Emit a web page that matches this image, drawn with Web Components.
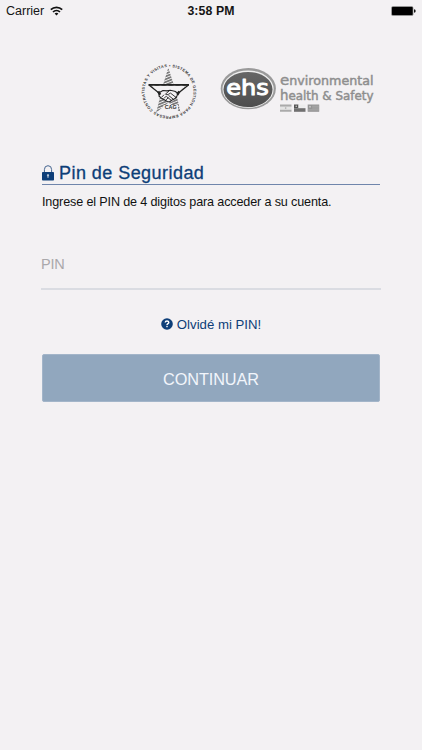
<!DOCTYPE html>
<html lang="es">
<head>
<meta charset="utf-8">
<meta name="viewport" content="width=device-width, initial-scale=1">
<title>Pin de Seguridad</title>
<style>
  body {
    margin: 0;
    min-height: 100vh;
    background: #f3f1f3;
    color: #111;
    font-family: "Liberation Sans", Arial, sans-serif;
  }
</style>
</head>
<body>
<pin-screen></pin-screen>

<script>
class StatusBar extends HTMLElement {
  constructor() {
    super();
    this.attachShadow({ mode: 'open' });
  }

  connectedCallback() {
    this.shadowRoot.innerHTML = `
      <style>
        :host {
          display: grid;
          grid-template-columns: 1fr auto 1fr;
          align-items: center;
          height: 22px;
          padding: 0 6px;
          box-sizing: border-box;
          font-size: 12.5px;
          color: #151515;
        }
        .left {
          display: flex;
          align-items: center;
          gap: 6px;
        }
        .time {
          font-weight: bold;
          font-size: 12.3px;
          letter-spacing: 0.1px;
        }
        .battery {
          justify-self: end;
        }
        svg {
          display: block;
        }
      </style>
      <div class="left">
        <span>${this.getAttribute('carrier')}</span>
        <svg width="13" height="10" viewBox="0 0 13 10" fill="none" stroke="#111" stroke-width="1.7">
          <path d="M.8 3.7a8.1 8.1 0 0 1 11.4 0"/>
          <path d="M3 6a5 5 0 0 1 7 0"/>
          <path d="M6.5 9.6 4.6 7.6a2.7 2.7 0 0 1 3.8 0Z" fill="#111" stroke="none"/>
        </svg>
      </div>
      <div class="time">${this.getAttribute('time')}</div>
      <svg class="battery" width="25" height="10" viewBox="0 0 25 10">
        <rect x=".3" y=".3" width="22" height="9.4" rx="1.5" fill="#777"/>
        <rect x="1" y="1" width="20.6" height="8" rx=".8" fill="#000"/>
        <path d="M23 3.3q1.7.2 1.7 1.7T23 6.7Z" fill="#111"/>
      </svg>
    `;
  }
}

class SealLogo extends HTMLElement {
  constructor() {
    super();
    this.attachShadow({ mode: 'open' });
  }

  connectedCallback() {
    this.shadowRoot.innerHTML = `
      <style>
        :host {
          display: block;
        }
        svg {
          display: block;
          overflow: visible;
        }
        text {
          font-family: "Liberation Sans", Arial, sans-serif;
          font-weight: bold;
          fill: #333;
        }
      </style>
      <svg width="56" height="56" viewBox="0 0 56 56">
        <defs>
          <path id="ring" d="M31.4 4.2A24.5 24.5 0 0 1 24.6 52.8A24.5 24.5 0 0 1 31.4 4.2"/>
          <pattern id="stripes" width="4" height="2.6" patternUnits="userSpaceOnUse" patternTransform="rotate(-22)">
            <rect width="4" height="1.7" fill="#777"/>
          </pattern>
        </defs>
        <text font-size="3.9"><textPath href="#ring" textLength="151">SISTEMA DE GESTION PARA EMPRESAS CONTRATISTAS Y VISITAS •</textPath></text>
        <path d="M27.3 4.8 32.6 21 48 21.3 35.6 32 39.5 49.5 27.5 39.5 15.2 49.5 19.5 32 7 21.3 22.3 21Z" fill="url(#stripes)"/>
        <path d="M11 23H44L35.5 32 32 38 27 40 17.5 32Z" fill="#f3f1f3"/>
        <!-- bowl and handshake -->
        <path d="M7.5 21.9H48" stroke="#222" stroke-width="1.6"/>
        <path d="M8 22 18 30M47.5 22 37.5 30" stroke="#222" stroke-width="1.2"/>
        <g transform="translate(0 .6)">
          <path d="m18 29.2 4-2.3 4 .4 3.2-.7 4.6 1 3.2 2-1.2 3.2-2.1 2.4-2.5 1.1-2.5 1.9-2.4-.2-5.2-3-3-2.3Z" fill="#f3f1f3" stroke="#222" stroke-width="1.1" stroke-linejoin="round"/>
          <path d="m28.5 27-4 3.5q1.3 1.4 3.2.1l1.8-1.1 6 4.7m-7.7-2.2 4.6 3.7m-6.6-2.5 4.2 3.3M21 33.2l1.8-1.8m.4 3.2 1.8-1.8m.4 3.1 1.7-1.6" fill="none" stroke="#222" stroke-width=".9" stroke-linecap="round"/>
          <path d="m16.2 28.6 2-1.5 2 3.2-2 1.7ZM39.3 28.5l-2-1.4-2 3.2 2 1.7Z" fill="#222"/>
        </g>
        <rect x="22.5" y="42" width="14.5" height="5.2" fill="#f3f1f3"/>
        <text x="23.7" y="46.4" font-size="4.8" textLength="12" lengthAdjust="spacingAndGlyphs">CAG</text>
      </svg>
    `;
  }
}

class EhsLogo extends HTMLElement {
  constructor() {
    super();
    this.attachShadow({ mode: 'open' });
  }

  connectedCallback() {
    this.shadowRoot.innerHTML = `
      <style>
        :host {
          display: block;
        }
        svg {
          display: block;
        }
        text {
          font-family: "DejaVu Sans", sans-serif;
          fill: #8e8e8e;
          stroke: #8e8e8e;
          stroke-width: 0.45;
        }
        .mark {
          fill: #fff;
          stroke: #fff;
          stroke-width: 1;
          stroke-linejoin: round;
        }
      </style>
      <svg width="156" height="49" viewBox="0 0 156 49">
        <defs>
          <linearGradient id="disc" x2="0" y2="1">
            <stop stop-color="#666"/>
            <stop offset="1" stop-color="#4d4d4d"/>
          </linearGradient>
        </defs>
        <ellipse cx="28.3" cy="25.6" rx="27.6" ry="20.6" fill="#9a9a9a"/>
        <ellipse cx="28.1" cy="26.1" rx="25.6" ry="18.7" fill="#eee"/>
        <ellipse cx="28" cy="26.5" rx="24.5" ry="17.6" fill="url(#disc)"/>
        <text class="mark" x="6.3" y="32" font-size="21.5" textLength="42.5" lengthAdjust="spacingAndGlyphs">ehs</text>
        <text x="60" y="22" textLength="93.5" lengthAdjust="spacingAndGlyphs" font-size="11.8"><tspan font-size="14">e</tspan>nvironmental</text>
        <text x="60" y="37.3" textLength="93.5" lengthAdjust="spacingAndGlyphs" font-size="11.8"><tspan font-size="13.2">h</tspan>ealth &amp; Safety</text>
        <!-- flags -->
        <g transform="translate(60 41.5)">
          <path d="M0 0h11.5v2.3H0zM0 5h11.5v2.3H0z" fill="#aaa"/>
          <path d="M0 2.3h11.5V5H0z" fill="#e4e4e4"/>
          <circle cx="5.7" cy="3.6" r=".8" fill="#aaa"/>
        </g>
        <g transform="translate(74 41.5)">
          <path d="M0 0h4.5v3.7H0z" fill="#555"/>
          <path d="M4.5 0h7v3.7h-7z" fill="#ededed"/>
          <path d="M0 3.7h11.5v3.6H0z" fill="#707070"/>
          <circle cx="2.2" cy="1.8" r=".7" fill="#ddd"/>
        </g>
        <g transform="translate(87.7 41.5)">
          <path d="M0 0h11.5v7.3H0z" fill="#949494"/>
          <path d="M4.5 1.7h7M4.5 3.5h7M0 5.4h11.5" stroke="#b6b6b6" stroke-width=".7"/>
          <circle cx="2.3" cy="2.2" r="1" fill="#c4c4c4"/>
        </g>
      </svg>
    `;
  }
}

class SectionTitle extends HTMLElement {
  constructor() {
    super();
    this.attachShadow({ mode: 'open' });
  }

  connectedCallback() {
    this.shadowRoot.innerHTML = `
      <style>
        :host {
          display: block;
          border-bottom: 1.5px solid #6f85ab;
          color: #0d3e78;
        }
        h1 {
          display: flex;
          align-items: center;
          gap: 5px;
          height: 22px;
          margin: 0;
          font-size: 18px;
          font-weight: normal;
          letter-spacing: 0.45px;
          -webkit-text-stroke: 0.3px currentColor;
        }
        svg {
          display: block;
        }
      </style>
      <h1>
        <svg width="12" height="16" viewBox="0 0 12 16">
          <path d="M2.4 8V4.6a3.6 3.9 0 0 1 7.2 0V8" fill="none" stroke="#45658f" stroke-width="1"/>
          <rect y="7" width="12" height="8.6" rx=".8" fill="#0d3e78"/>
          <path d="M5.4 12.8v-1.6a1.1 1.1 0 1 1 1.2 0v1.6Z" fill="#b9c8d8"/>
        </svg>
        <span><slot></slot></span>
      </h1>
    `;
  }
}

class PinField extends HTMLElement {
  constructor() {
    super();
    this.attachShadow({ mode: 'open' });
  }

  connectedCallback() {
    this.shadowRoot.innerHTML = `
      <style>
        :host {
          display: block;
          height: 50px;
          box-sizing: border-box;
          border-bottom: 2px solid #dadce2;
          line-height: 49px;
          font-size: 14.5px;
          letter-spacing: -0.2px;
          color: #aaa8ab;
        }
      </style>
      <slot></slot>
    `;
  }
}

class HelpLink extends HTMLElement {
  constructor() {
    super();
    this.attachShadow({ mode: 'open' });
  }

  connectedCallback() {
    this.shadowRoot.innerHTML = `
      <style>
        :host {
          display: flex;
          justify-content: center;
          align-items: center;
          gap: 4px;
          height: 18px;
          font-size: 13.2px;
          color: #0d3e78;
        }
        svg {
          display: block;
        }
      </style>
      <svg width="12" height="12" viewBox="0 0 12 12">
        <circle cx="6" cy="6" r="5.8" fill="#0d3e78"/>
        <path d="M4.2 4.5Q4.3 3 6 3t1.8 1.4C7.8 5.6 6 5.6 6 7" fill="none" stroke="#fff" stroke-width="1.4"/>
        <rect x="5.3" y="7.8" width="1.4" height="1.4" fill="#fff"/>
      </svg>
      <span><slot></slot></span>
    `;
  }
}

class PrimaryButton extends HTMLElement {
  constructor() {
    super();
    this.attachShadow({ mode: 'open' });
  }

  connectedCallback() {
    this.shadowRoot.innerHTML = `
      <style>
        :host {
          display: block;
        }
        button {
          display: block;
          width: 100%;
          height: 48px;
          padding: 2px 0 0;
          border: 1px solid #a3b5c9;
          border-radius: 2px;
          background: #91a7be;
          color: #f1f5fb;
          font: 16.3px "Liberation Sans", Arial, sans-serif;
          letter-spacing: -0.1px;
        }
      </style>
      <button type="button"><slot></slot></button>
    `;
  }
}

class PinScreen extends HTMLElement {
  constructor() {
    super();
    this.attachShadow({ mode: 'open' });
  }

  connectedCallback() {
    this.shadowRoot.innerHTML = `
      <style>
        :host {
          display: block;
        }
        header {
          display: flex;
          justify-content: flex-end;
          gap: 23px;
          padding: 41px 46px 0 0;
        }
        main {
          padding: 43px 42px 0;
        }
        p {
          margin: 9px 0 0;
          font-size: 12.6px;
          line-height: 16px;
          letter-spacing: -0.14px;
        }
        pin-field {
          margin: 30px -1px 0;
        }
        help-link {
          margin-top: 25px;
        }
        primary-button {
          margin-top: 21px;
        }
      </style>
      <status-bar carrier="Carrier" time="3:58 PM"></status-bar>
      <header>
        <seal-logo></seal-logo>
        <ehs-logo></ehs-logo>
      </header>
      <main>
        <section-title>Pin de Seguridad</section-title>
        <p>Ingrese el PIN de 4 digitos para acceder a su cuenta.</p>
        <pin-field>PIN</pin-field>
        <help-link>Olvidé mi PIN!</help-link>
        <primary-button>CONTINUAR</primary-button>
      </main>
    `;
  }
}

customElements.define('status-bar', StatusBar);
customElements.define('seal-logo', SealLogo);
customElements.define('ehs-logo', EhsLogo);
customElements.define('section-title', SectionTitle);
customElements.define('pin-field', PinField);
customElements.define('help-link', HelpLink);
customElements.define('primary-button', PrimaryButton);
customElements.define('pin-screen', PinScreen);
</script>
</body>
</html>
